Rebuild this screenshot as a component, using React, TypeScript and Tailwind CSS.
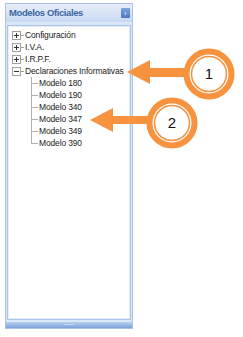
import React from "react";

const font = { fontFamily: "'Liberation Sans', Arial, sans-serif" };

function Box({ open }: { open?: boolean }) {
  return (
    <span className="relative inline-block w-[9px] h-[9px] border border-[#a0a0a0] bg-white shrink-0">
      <span className="absolute left-[1px] top-[3px] w-[5px] h-[1px] bg-[#333]" />
      {!open && <span className="absolute left-[3px] top-[1px] w-[1px] h-[5px] bg-[#333]" />}
    </span>
  );
}

function Node({ label, open }: { label: string; open?: boolean }) {
  return (
    <div className="flex items-center h-[12px] whitespace-nowrap">
      <Box open={open} />
      <span className="w-[3px] h-[1px] bg-[#a0a0a0] mr-[1px]" />
      <span>{label}</span>
    </div>
  );
}

const children = ["Modelo 180", "Modelo 190", "Modelo 340", "Modelo 347", "Modelo 349", "Modelo 390"];

export default function App() {
  return (
    <div className="relative w-[243px] h-[337px] bg-white overflow-hidden" style={font}>
      <div className="ml-[5px] pt-[3px] w-[128px]">
        <div className="flex flex-col h-[326px] border border-[#a9c4e8] bg-[#dbe7f7]">
          <div className="flex items-center justify-between h-[18px] pl-[3px] pr-[2px] bg-gradient-to-b from-[#e7effa] to-[#c7d9f2]">
            <span className="text-[9.5px] font-bold text-[#3f66a3] tracking-[-0.4px] whitespace-nowrap">Modelos Oficiales</span>
            <span className="w-[9px] h-[10px] rounded-[1px] bg-gradient-to-b from-[#7da4dc] to-[#4a78c2] flex items-center justify-center">
              <span className="text-white text-[7px] leading-none">‹</span>
            </span>
          </div>
          <div className="flex-1 px-[1px] pt-[3px] pb-[2px]">
            <div className="h-full border border-[#a9c4e8] bg-white">
              <div className="h-full border border-[#e4edf8] pl-[3px] pt-[2px] text-[8.5px] tracking-[-0.15px] text-[#222] leading-[12px]">
                <Node label="Configuración" />
                <Node label="I.V.A." />
                <Node label="I.R.P.F." />
                <Node label="Declaraciones Informativas" open />
                <div className="relative ml-[19px]">
                  <span className="absolute left-0 top-0 w-[1px] h-[66px] bg-[#b0b0b0]" />
                  {children.map((c) => (
                    <div key={c} className="flex items-center h-[12px] whitespace-nowrap">
                      <span className="w-[7px] h-[1px] bg-[#b0b0b0] mr-[1px]" />
                      <span>{c}</span>
                    </div>
                  ))}
                </div>
              </div>
            </div>
          </div>
          <div className="relative h-[6px] bg-gradient-to-b from-[#b9d0ef] to-[#7aa2da]">
            <div className="absolute left-1/2 -translate-x-1/2 top-[2px] flex gap-[1px]">
              {[0, 1, 2, 3, 4].map((i) => (
                <span key={i} className="w-[1px] h-[1px] bg-[#e8f0fb]" />
              ))}
            </div>
          </div>
        </div>
      </div>
      <svg className="absolute left-0 top-0" width="243" height="337" viewBox="0 0 243 337">
        <g fill="#f7923f">
          <polygon points="127,72 150,60 150,68 186,68 186,77 150,77 150,84" />
          <polygon points="90,120 113,108 113,116 150,116 150,124 113,124 113,132" />
        </g>
        <g>
          <circle cx="209" cy="74" r="22.5" fill="white" stroke="#f7923f" strokeWidth="6" />
          <circle cx="209" cy="74" r="17.5" fill="white" stroke="#f7923f" strokeWidth="1.5" />
          <text x="209" y="79" textAnchor="middle" fontSize="15" fontFamily="'Liberation Sans', sans-serif" fill="#111">1</text>
          <circle cx="172" cy="123" r="22.5" fill="white" stroke="#f7923f" strokeWidth="6" />
          <circle cx="172" cy="123" r="17.5" fill="white" stroke="#f7923f" strokeWidth="1.5" />
          <text x="172" y="128" textAnchor="middle" fontSize="15" fontFamily="'Liberation Sans', sans-serif" fill="#111">2</text>
        </g>
      </svg>
    </div>
  );
}
